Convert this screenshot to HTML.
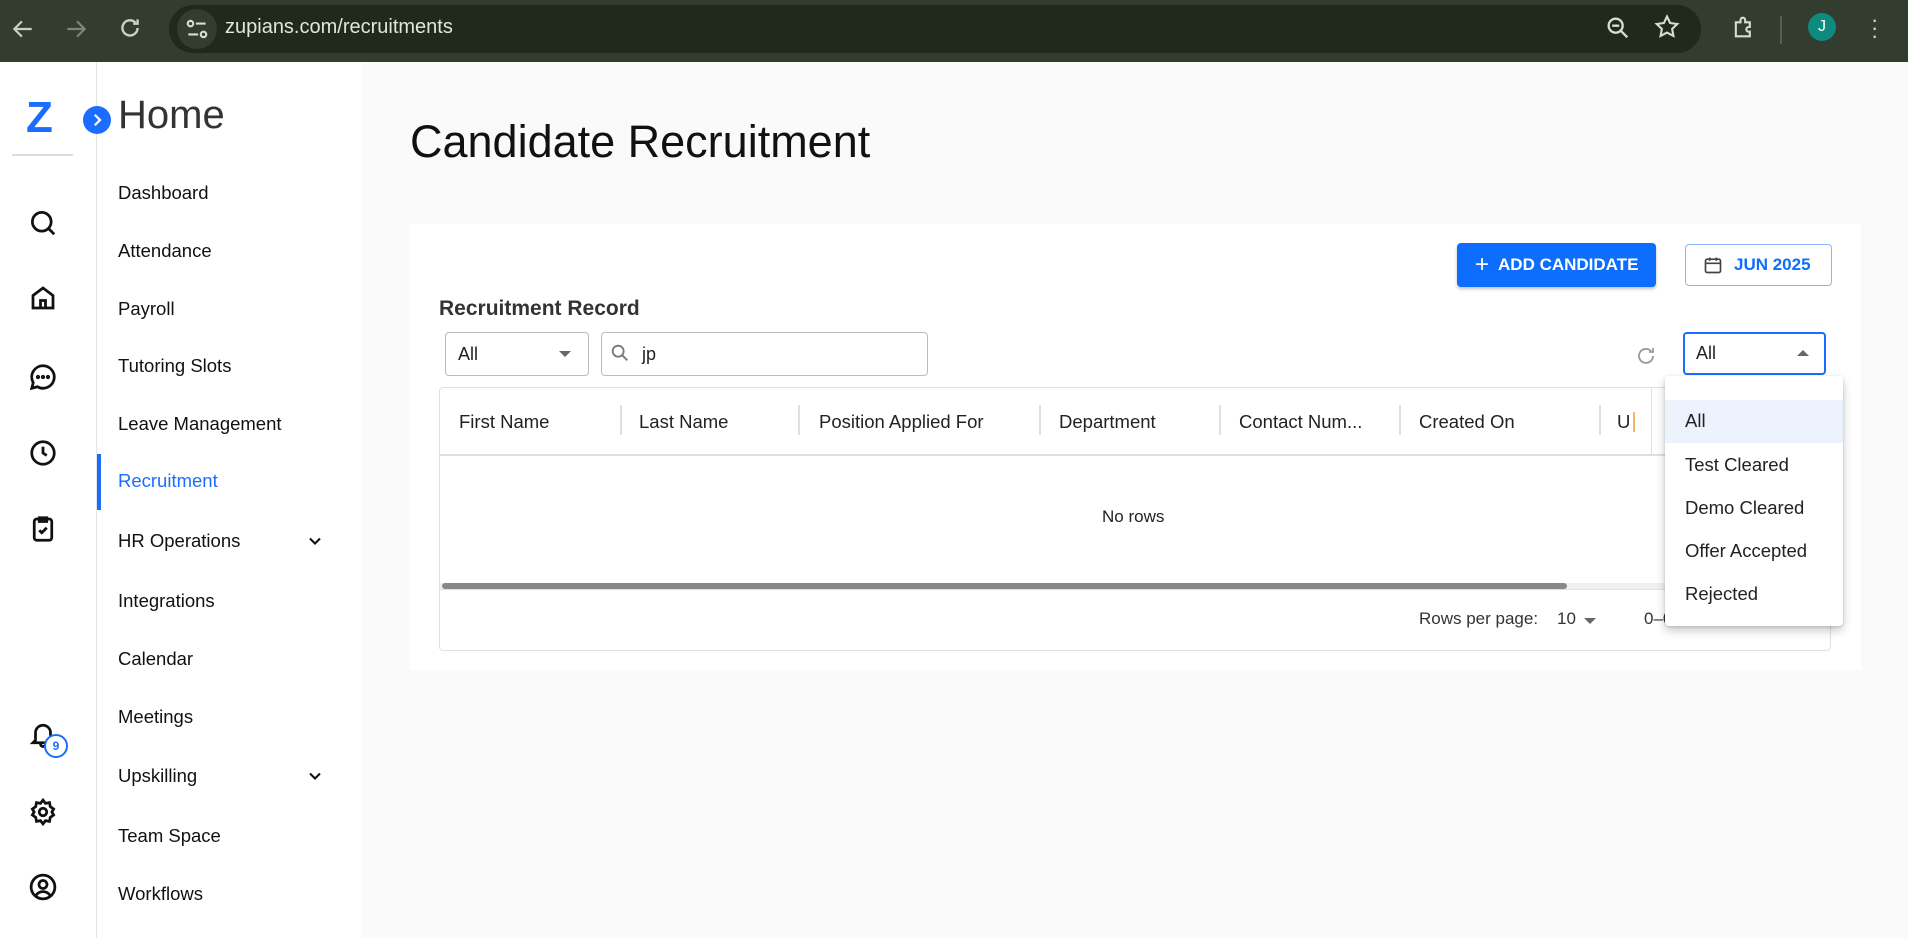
<!DOCTYPE html>
<html><head><meta charset="utf-8"><style>
*{box-sizing:border-box;margin:0;padding:0}
body{width:1908px;height:938px;overflow:hidden;font-family:"Liberation Sans",sans-serif;background:#fafafa;position:relative;color:#111}
.a{position:absolute}
.top{left:0;top:0;width:1908px;height:62px;background:#323d2f}
.pill{left:169px;top:5px;width:1532px;height:48px;border-radius:24px;background:#1f2a1c}
.url{left:225px;top:16px;font-size:20px;color:#dfe6da}
.rail{left:0;top:62px;width:97px;height:876px;background:#fff;border-right:1px solid #e3e3e3}
.nav{left:97px;top:62px;width:265px;height:876px;background:#fff}
.ni{position:absolute;left:118px;font-size:18.5px;color:#111;transform:translateY(-50%)}
.ic{position:absolute;left:28px;width:30px;height:30px}
.card{left:410px;top:224px;width:1451px;height:446px;background:#fff}
.th{position:absolute;top:411px;font-size:18.5px;color:#222}
.sep{position:absolute;top:405px;width:2px;height:30px;background:#e0e0e0}
.mi{position:absolute;left:1685px;font-size:18.5px;color:#222;transform:translateY(-50%)}
</style></head><body>
<div class="a top"></div>
<svg class="a" style="left:10px;top:16px" width="26" height="26" viewBox="0 0 24 24" fill="none" stroke="#c9d1c4" stroke-width="2"><path d="M20 12H5M11 5l-7 7 7 7"/></svg>
<svg class="a" style="left:63px;top:16px" width="26" height="26" viewBox="0 0 24 24" fill="none" stroke="#7c8678" stroke-width="2"><path d="M4 12h15M13 5l7 7-7 7"/></svg>
<svg class="a" style="left:117px;top:15px" width="26" height="26" viewBox="0 0 24 24" fill="none" stroke="#c9d1c4" stroke-width="2.2"><path d="M19 12a7 7 0 1 1-2-5M19 4v4h-4"/></svg>
<div class="a pill"></div>
<div class="a" style="left:177px;top:9px;width:40px;height:40px;border-radius:20px;background:#323d2f"></div>
<svg class="a" style="left:184px;top:16px" width="26" height="26" viewBox="0 0 24 24" fill="none" stroke="#d6ddd1" stroke-width="2"><circle cx="6" cy="7" r="2.5"/><path d="M11 7h9M4 17h9"/><circle cx="18" cy="17" r="2.5"/></svg>
<div class="a url">zupians.com/recruitments</div>
<svg class="a" style="left:1604px;top:14px" width="28" height="28" viewBox="0 0 24 24" fill="none" stroke="#d6ddd1" stroke-width="2"><circle cx="10" cy="10" r="6"/><path d="M14.5 14.5L20 20M7 10h6"/></svg>
<svg class="a" style="left:1653px;top:13px" width="28" height="28" viewBox="0 0 24 24" fill="none" stroke="#d6ddd1" stroke-width="1.8"><path d="M12 3l2.7 5.6 6.1.8-4.4 4.2 1.1 6.1L12 16.8 6.5 19.7l1.1-6.1L3.2 9.4l6.1-.8z"/></svg>
<svg class="a" style="left:1730px;top:13px" width="28" height="28" viewBox="0 0 24 24" fill="none" stroke="#d6ddd1" stroke-width="1.8"><path d="M5 8h4V6a2 2 0 0 1 4 0v2h4v4h-1a2 2 0 0 0 0 4h1v4H5z"/></svg>
<div class="a" style="left:1780px;top:16px;width:2px;height:28px;background:#55604f"></div>
<div class="a" style="left:1808px;top:13px;width:28px;height:28px;border-radius:14px;background:#0f8a7e;color:#fff;font-size:16px;text-align:center;line-height:28px">J</div>
<div class="a" style="left:1871px;top:16px;color:#d6ddd1;font-size:22px;line-height:8px;width:6px;text-align:center">·<br>·<br>·</div>

<div class="a rail"></div>
<div class="a" style="left:26px;top:95px;font-size:44px;font-weight:bold;color:#1a6dff;line-height:46px">Z</div>
<div class="a" style="left:12px;top:154px;width:61px;height:2px;background:#ddd"></div>
<div class="a nav"></div>
<div class="a" style="left:83px;top:106px;width:28px;height:28px;border-radius:14px;background:#1a6dff"></div>
<svg class="a" style="left:88px;top:111px" width="18" height="18" viewBox="0 0 24 24" fill="none" stroke="#fff" stroke-width="3"><path d="M9 5l7 7-7 7"/></svg>
<div class="a" style="left:118px;top:93px;font-size:40px;color:#333">Home</div>

<svg class="ic" style="top:208px" viewBox="0 0 24 24" fill="none" stroke="#111" stroke-width="2.2"><circle cx="11" cy="11" r="7.5"/><path d="M16.5 16.5L21 21"/></svg>
<svg class="ic" style="top:283px" viewBox="0 0 24 24" fill="none" stroke="#111" stroke-width="2.2"><path d="M4 10l8-6 8 6v10H4z"/><path d="M10 20v-6h4v6"/></svg>
<svg class="ic" style="top:362px" viewBox="0 0 24 24" fill="none" stroke="#111" stroke-width="2.2"><path d="M12 3a9 9 0 0 0-7.8 13.5L3 21l4.5-1.2A9 9 0 1 0 12 3z"/><circle cx="8" cy="12" r=".6" fill="#111"/><circle cx="12" cy="12" r=".6" fill="#111"/><circle cx="16" cy="12" r=".6" fill="#111"/></svg>
<svg class="ic" style="top:438px" viewBox="0 0 24 24" fill="none" stroke="#111" stroke-width="2.2"><circle cx="12" cy="12" r="9"/><path d="M12 7v5l3 2"/></svg>
<svg class="ic" style="top:514px" viewBox="0 0 24 24" fill="none" stroke="#111" stroke-width="2.2"><rect x="5" y="4" width="14" height="17" rx="2"/><path d="M9 3h6v3H9zM9 13l2 2 4-4"/></svg>
<svg class="ic" style="top:719px" viewBox="0 0 24 24" fill="none" stroke="#111" stroke-width="2.2"><path d="M6 17V11a6 6 0 0 1 12 0v6l2 2H4zM10 20a2 2 0 0 0 4 0"/></svg>
<div class="a" style="left:44px;top:734px;width:24px;height:24px;border-radius:12px;border:2px solid #1a6dff;background:#fff;color:#1a6dff;font-size:12px;font-weight:bold;text-align:center;line-height:20px">9</div>
<svg class="ic" style="top:797px" viewBox="0 0 24 24" fill="none" stroke="#111" stroke-width="2.2"><circle cx="12" cy="12" r="3"/><path d="M12 2.5l2 2.6 3.2-.6.6 3.2 2.7 1.9-1.4 2.4 1.4 2.4-2.7 1.9-.6 3.2-3.2-.6-2 2.6-2-2.6-3.2.6-.6-3.2-2.7-1.9 1.4-2.4-1.4-2.4 2.7-1.9.6-3.2 3.2.6z"/></svg>
<svg class="ic" style="top:872px" viewBox="0 0 24 24" fill="none" stroke="#111" stroke-width="2.2"><circle cx="12" cy="12" r="9.5"/><circle cx="12" cy="10" r="3.2"/><path d="M6.5 18.5c1.5-2 3.3-2.8 5.5-2.8s4 .8 5.5 2.8"/></svg>

<div class="ni" style="top:193px">Dashboard</div>
<div class="ni" style="top:251px">Attendance</div>
<div class="ni" style="top:309px">Payroll</div>
<div class="ni" style="top:366px">Tutoring Slots</div>
<div class="ni" style="top:424px">Leave Management</div>
<div class="a" style="left:97px;top:454px;width:4px;height:56px;background:#1a6dff"></div>
<div class="ni" style="top:481px;color:#1a6dff">Recruitment</div>
<div class="ni" style="top:541px">HR Operations</div>
<svg class="a" style="left:305px;top:531px" width="20" height="20" viewBox="0 0 24 24" fill="none" stroke="#111" stroke-width="2.5"><path d="M6 9l6 6 6-6"/></svg>
<div class="ni" style="top:601px">Integrations</div>
<div class="ni" style="top:659px">Calendar</div>
<div class="ni" style="top:717px">Meetings</div>
<div class="ni" style="top:776px">Upskilling</div>
<svg class="a" style="left:305px;top:766px" width="20" height="20" viewBox="0 0 24 24" fill="none" stroke="#111" stroke-width="2.5"><path d="M6 9l6 6 6-6"/></svg>
<div class="ni" style="top:836px">Team Space</div>
<div class="ni" style="top:894px">Workflows</div>

<div class="a" style="left:410px;top:116px;font-size:45px;color:#111">Candidate Recruitment</div>
<div class="a card"></div>
<div class="a" style="left:1457px;top:243px;width:199px;height:44px;background:#0d6efd;border-radius:4px;box-shadow:0 2px 3px rgba(0,0,0,.25);color:#fff;font-size:17px;font-weight:bold;line-height:44px;padding-left:18px"><span style="font-size:24px;font-weight:normal;vertical-align:-2px;margin-right:9px">+</span>ADD CANDIDATE</div>
<div class="a" style="left:1685px;top:244px;width:147px;height:42px;border:1.5px solid #8fb6fb;border-radius:4px;color:#0d6efd;font-size:17px;font-weight:bold;line-height:40px;padding-left:48px">JUN 2025</div>
<svg class="a" style="left:1703px;top:255px" width="20" height="20" viewBox="0 0 24 24" fill="none" stroke="#444" stroke-width="2"><rect x="3" y="5" width="18" height="16" rx="2"/><path d="M3 10h18M8 3v4M16 3v4"/></svg>

<div class="a" style="left:439px;top:297px;font-size:21px;font-weight:bold;color:#333">Recruitment Record</div>
<div class="a" style="left:445px;top:332px;width:144px;height:44px;border:1px solid #bbb;border-radius:4px;font-size:18px;line-height:42px;padding-left:12px;color:#222">All</div>
<div class="a" style="left:559px;top:351px;border:6px solid transparent;border-top-color:#666;border-bottom:0"></div>
<div class="a" style="left:601px;top:332px;width:327px;height:44px;border:1px solid #bbb;border-radius:4px;font-size:18px;line-height:42px;padding-left:40px;color:#222">jp</div>
<svg class="a" style="left:609px;top:342px" width="22" height="22" viewBox="0 0 24 24" fill="none" stroke="#777" stroke-width="2"><circle cx="10" cy="10" r="6"/><path d="M14.5 14.5L20 20"/></svg>
<svg class="a" style="left:1634px;top:344px" width="24" height="24" viewBox="0 0 24 24" fill="none" stroke="#999" stroke-width="1.8"><path d="M19 12a7 7 0 1 1-2-5M19 4v4h-4"/></svg>
<div class="a" style="left:1683px;top:332px;width:143px;height:43px;border:2px solid #1a6dff;border-radius:4px;font-size:18px;line-height:39px;padding-left:11px;color:#222">All</div>
<div class="a" style="left:1797px;top:350px;border:6px solid transparent;border-bottom-color:#666;border-top:0"></div>

<div class="a" style="left:439px;top:387px;width:1392px;height:264px;border:1px solid #e0e0e0;border-radius:4px"></div>
<div class="a" style="left:440px;top:454px;width:1390px;height:2px;background:#e0e0e0"></div>
<div class="th" style="left:459px">First Name</div>
<div class="sep" style="left:620px"></div>
<div class="th" style="left:639px">Last Name</div>
<div class="sep" style="left:798px"></div>
<div class="th" style="left:819px">Position Applied For</div>
<div class="sep" style="left:1039px"></div>
<div class="th" style="left:1059px">Department</div>
<div class="sep" style="left:1219px"></div>
<div class="th" style="left:1239px">Contact Num...</div>
<div class="sep" style="left:1399px"></div>
<div class="th" style="left:1419px">Created On</div>
<div class="sep" style="left:1599px"></div>
<div class="th" style="left:1617px">U</div>
<div class="a" style="left:1633px;top:412px;width:2px;height:20px;background:#f5b76a"></div>
<div class="a" style="left:1651px;top:387px;width:1px;height:68px;background:#e0e0e0"></div>
<div class="a" style="left:1102px;top:507px;font-size:17px;color:#222">No rows</div>
<div class="a" style="left:440px;top:583px;width:1390px;height:6px;background:#f0f0f0"></div>
<div class="a" style="left:442px;top:583px;width:1125px;height:6px;background:#888;border-radius:3px"></div>
<div class="a" style="left:440px;top:589px;width:1390px;height:1px;background:#e0e0e0"></div>
<div class="a" style="left:1419px;top:609px;font-size:17px;color:#333">Rows per page:</div>
<div class="a" style="left:1557px;top:609px;font-size:17px;color:#333">10</div>
<div class="a" style="left:1584px;top:618px;border:6px solid transparent;border-top-color:#666;border-bottom:0"></div>
<div class="a" style="left:1644px;top:609px;font-size:17px;color:#333">0–0</div>

<div class="a" style="left:1665px;top:376px;width:178px;height:250px;background:#fff;border-radius:4px;box-shadow:0 5px 10px rgba(0,0,0,.2),0 1px 3px rgba(0,0,0,.15)"></div>
<div class="a" style="left:1665px;top:400px;width:178px;height:43px;background:#edf3fd"></div>
<div class="mi" style="top:421px">All</div>
<div class="mi" style="top:465px">Test Cleared</div>
<div class="mi" style="top:508px">Demo Cleared</div>
<div class="mi" style="top:551px">Offer Accepted</div>
<div class="mi" style="top:594px">Rejected</div>
</body></html>
